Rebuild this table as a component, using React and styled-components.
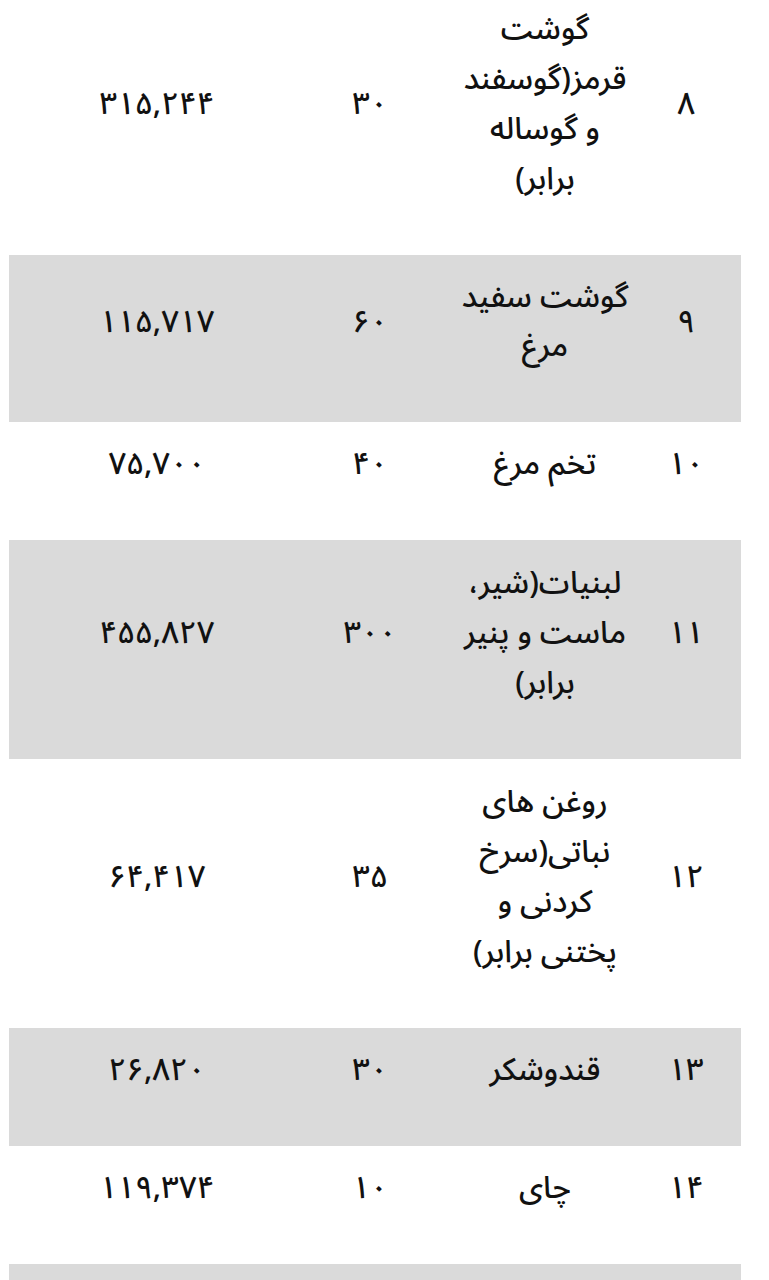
import React from "react";
import styled, { createGlobalStyle } from "styled-components";

const Global = createGlobalStyle`
  html, body { margin: 0; padding: 0; background: #ffffff; }
  body { overflow: hidden; }
`;

const Table = styled.div`
  direction: rtl;
  width: 732px;
  margin: -14px 0 0 9px;
  font-family: "Noto Sans Arabic", "Vazirmatn", "DejaVu Sans", sans-serif;
  font-size: 31px;
  font-weight: 500;
  color: #111111;
`;

const Row = styled.div`
  display: grid;
  grid-template-columns: 110px 172px 178px 272px;
  align-items: center;
  padding: 18px 0 51px;
  line-height: ${(p) => (p.$lines > 2 ? 50 : 49)}px;
  background: ${(p) => (p.$shaded ? "#dadada" : "#ffffff")};
`;

const Cell = styled.div`
  text-align: center;
  white-space: nowrap;
  padding-left: ${(p) => p.$padLeft || 0}px;
`;

const NameLine = styled.span`
  display: block;
`;

const rows = [
  { n: "۸", name: ["گوشت", "قرمز(گوسفند", "و گوساله", "برابر)"], q: "۳۰", p: "۳۱۵,۲۴۴" },
  { n: "۹", name: ["گوشت سفید", "مرغ"], q: "۶۰", p: "۱۱۵,۷۱۷" },
  { n: "۱۰", name: ["تخم مرغ"], q: "۴۰", p: "۷۵,۷۰۰" },
  { n: "۱۱", name: ["لبنیات(شیر،", "ماست و پنیر", "برابر)"], q: "۳۰۰", p: "۴۵۵,۸۲۷" },
  { n: "۱۲", name: ["روغن های", "نباتی(سرخ", "کردنی و", "پختنی برابر)"], q: "۳۵", p: "۶۴,۴۱۷" },
  { n: "۱۳", name: ["قندوشکر"], q: "۳۰", p: "۲۶,۸۲۰" },
  { n: "۱۴", name: ["چای"], q: "۱۰", p: "۱۱۹,۳۷۴" },
  { n: "", name: [], q: "", p: "" },
];

export default function App() {
  return (
    <>
      <Global />
      <Table>
        {rows.map((r, i) => (
          <Row key={i} $shaded={i % 2 === 1} $lines={Math.max(1, r.name.length)}>
            <Cell>{r.n}</Cell>
            <Cell>
              {r.name.map((l) => (
                <NameLine key={l}>{l}</NameLine>
              ))}
            </Cell>
            <Cell>{r.q}</Cell>
            <Cell $padLeft={24}>{r.p}</Cell>
          </Row>
        ))}
      </Table>
    </>
  );
}
